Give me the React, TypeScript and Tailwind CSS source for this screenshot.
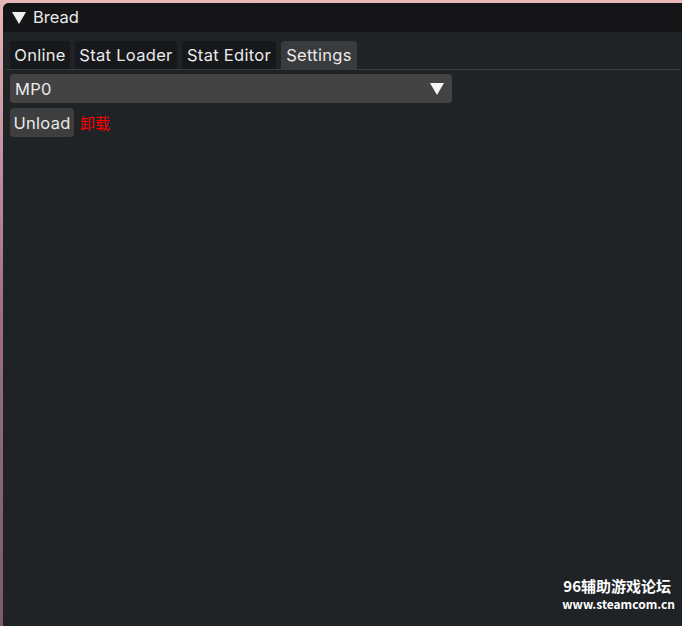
import React from "react";

export default function App() {
  const tabs = [
    { label: "Online", w: "w-[60px]", active: false },
    { label: "Stat Loader", w: "w-[102px]", active: false },
    { label: "Stat Editor", w: "w-[94px]", active: false },
    { label: "Settings", w: "w-[76px]", active: true },
  ];
  return (
    <div
      className="relative w-[682px] h-[626px] overflow-hidden bg-gradient-to-b from-[#e6b8b8] via-[#9c6f86] to-[#7a5b63]"
      style={{ fontFamily: "Inter, 'Noto Sans', 'Noto Sans CJK SC', sans-serif" }}
    >
      <div className="absolute left-[3px] top-[3px] w-[690px] h-[640px] flex flex-col bg-[#202326] rounded-tl-[6px] overflow-hidden">
        <div className="h-[29px] shrink-0 bg-[#151518] flex items-center pl-[9px] text-[16.5px] text-[#eaeaea]">
          <svg width="14" height="12" viewBox="0 0 14 12" className="mr-[7px]">
            <polygon points="0,0 14,0 7,12" fill="#f0f0f0" />
          </svg>
          <span className="leading-none">Bread</span>
        </div>
        <div className="flex gap-[5px] pl-[7px] pt-[9px] h-[37px] shrink-0">
          {tabs.map((t) => (
            <div
              key={t.label}
              className={`${t.w} h-[28px] rounded-t-[4px] flex items-center justify-center pt-[1px] text-[16.5px] tracking-[0.3px] text-[#eaeaea] ${
                t.active ? "bg-[#3a3b3d]" : "bg-[#17181b]"
              }`}
            >
              {t.label}
            </div>
          ))}
        </div>
        <div className="ml-[3px] w-[674px] h-px bg-[#3b3d40]" />
        <div className="pl-[7px] pt-[4px] flex flex-col gap-[5px]">
          <div className="w-[442px] h-[29px] rounded-[4px] bg-[#434343] flex items-center justify-between pl-[5px] pr-[8px] pt-[1px] text-[16.5px] tracking-[0.3px] text-[#eaeaea]">
            <span>MP0</span>
            <svg width="14" height="12" viewBox="0 0 14 12" className="-mt-[1px]">
              <polygon points="0,0 14,0 7,12" fill="#f5f5f5" />
            </svg>
          </div>
          <div className="flex items-center gap-[6px]">
            <div className="w-[64px] h-[29px] rounded-[4px] bg-[#3e3e3e] flex items-center justify-center pt-[1px] text-[16.5px] tracking-[0.3px] text-[#eaeaea]">
              Unload
            </div>
            <span className="text-[15px] text-[#ff0000] pt-[1px]" style={{ fontFamily: "'Noto Sans CJK SC', sans-serif" }}>
              卸载
            </span>
          </div>
        </div>
      </div>
      <div
        className="absolute right-[7px] top-[578px] flex flex-col items-end gap-[3px] text-white font-bold"
        style={{ fontFamily: "'Noto Sans CJK SC', 'Noto Sans', sans-serif" }}
      >
        <span className="text-[15px] leading-[16px] mr-[4px]">96辅助游戏论坛</span>
        <span className="text-[12px] leading-[13px]">www.steamcom.cn</span>
      </div>
    </div>
  );
}
